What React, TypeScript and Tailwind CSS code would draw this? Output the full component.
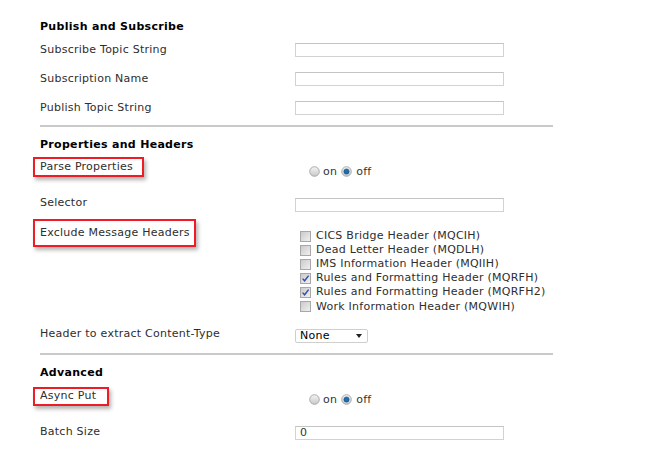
import React from "react";

const FONT = "font-['DejaVu_Sans',Verdana,sans-serif]";

function TextBox({ value = "" }: { value?: string }) {
  return (
    <div className="flex h-[14px] w-[209px] items-center border border-[#d2d2d2] border-t-[#c4c4c4] bg-white pl-[4px] text-[11px] leading-none text-[#333]">
      {value}
    </div>
  );
}

function Radio({ checked }: { checked?: boolean }) {
  return (
    <svg width="11" height="11" viewBox="0 0 11 11" aria-hidden="true">
      <defs>
        <linearGradient id="rg" x1="0" y1="0" x2="0" y2="1">
          <stop offset="0" stopColor="#f4f4f4" />
          <stop offset="1" stopColor="#c9c9c9" />
        </linearGradient>
      </defs>
      <circle cx="5.5" cy="5.5" r="4.8" fill="url(#rg)" stroke="#9a9a9a" strokeWidth="0.8" />
      {checked && <circle cx="5.5" cy="5.5" r="2.6" fill="#1d6fb0" stroke="#0d4a80" strokeWidth="0.6" />}
    </svg>
  );
}

function OnOff() {
  return (
    <div className="flex items-center text-[11px] leading-none text-[#333]">
      <Radio />
      <span className="ml-[3px]">on</span>
      <span className="ml-[4px] flex"><Radio checked /></span>
      <span className="ml-[4px]">off</span>
    </div>
  );
}

function Check({ checked }: { checked?: boolean }) {
  return (
    <svg width="11" height="11" viewBox="0 0 11 11" aria-hidden="true">
      <defs>
        <linearGradient id="cg" x1="0" y1="0" x2="1" y2="1">
          <stop offset="0" stopColor="#c8c8c8" />
          <stop offset="1" stopColor="#f2f2f2" />
        </linearGradient>
      </defs>
      <rect x="0.5" y="0.5" width="10" height="10" fill="url(#cg)" stroke="#a8a8a8" />
      {checked && <path d="M2.6 5.6 L4.6 7.8 L8.6 2.6" fill="none" stroke="#2f4fa8" strokeWidth="1.4" />}
    </svg>
  );
}

// red annotation frame round a label
function Marked({ children, className }: { children: React.ReactNode; className: string }) {
  return (
    <div
      className={`-ml-[7px] flex items-center border-2 border-[#ee1c24] pl-[5px] shadow-[2px_3px_4px_rgba(0,0,0,0.3)] ${className}`}
    >
      {children}
    </div>
  );
}

const headers = [
  ["CICS Bridge Header (MQCIH)", false],
  ["Dead Letter Header (MQDLH)", false],
  ["IMS Information Header (MQIIH)", false],
  ["Rules and Formatting Header (MQRFH)", true],
  ["Rules and Formatting Header (MQRFH2)", true],
  ["Work Information Header (MQWIH)", false],
] as const;

export default function App() {
  return (
    <div className={`h-[458px] w-[647px] overflow-hidden bg-white pl-[40px] text-[11px] tracking-[0.25px] text-[#2e2e2e] ${FONT}`}>
      {/* Publish and Subscribe */}
      <div className="mt-[20px] flex h-[14px] items-center font-bold tracking-[0.3px] text-black">Publish and Subscribe</div>

      <div className="mt-[9px] flex h-[14px] items-center">
        <div className="w-[255px]">Subscribe Topic String</div>
        <TextBox />
      </div>
      <div className="mt-[15px] flex h-[14px] items-center">
        <div className="w-[255px]">Subscription Name</div>
        <TextBox />
      </div>
      <div className="mt-[15px] flex h-[14px] items-center">
        <div className="w-[255px]">Publish Topic String</div>
        <TextBox />
      </div>

      <div className="mt-[10px] h-[2px] w-[513px] bg-[#c9c9c9]" />

      {/* Properties and Headers */}
      <div className="mt-[11px] flex h-[14px] items-center font-bold tracking-[0.3px] text-black">Properties and Headers</div>

      <div className="mt-[5px] flex items-start">
        <div className="w-[255px]">
          <Marked className="h-[20px] w-[111px]">Parse Properties</Marked>
        </div>
        <div className="pl-[14px] pt-[9px]">
          <OnOff />
        </div>
      </div>

      <div className="mt-[21px] flex h-[14px] items-center">
        <div className="w-[255px] -mt-[3px]">Selector</div>
        <TextBox />
      </div>

      <div className="mt-[7px] flex items-start">
        <div className="w-[255px]">
          <Marked className="h-[28px] w-[163px]">Exclude Message Headers</Marked>
        </div>
        <div className="flex flex-col pl-[5px] pt-[10px]">
          {headers.map(([label, checked]) => (
            <div key={label} className="flex h-[14.15px] items-center">
              <Check checked={checked} />
              <span className="ml-[5px]">{label}</span>
            </div>
          ))}
        </div>
      </div>

      <div className="mt-[15px] flex h-[14px] items-center">
        <div className="w-[255px] -mt-[3px]">Header to extract Content-Type</div>
        <div className="flex h-[14px] w-[73px] items-center justify-between rounded-[2px] border border-[#cfcfcf] bg-white pl-[4px] pr-[5px] text-black">
          <span>None</span>
          <svg width="6" height="4" viewBox="0 0 6 4" aria-hidden="true">
            <path d="M0 0 H6 L3 4 Z" fill="#222" />
          </svg>
        </div>
      </div>

      <div className="mt-[10px] h-[2px] w-[513px] bg-[#c9c9c9]" />

      {/* Advanced */}
      <div className="mt-[11px] flex h-[14px] items-center font-bold tracking-[0.3px] text-black">Advanced</div>

      <div className="mt-[7px] flex items-start">
        <div className="w-[255px]">
          <Marked className="h-[19px] w-[76px]">Async Put</Marked>
        </div>
        <div className="pl-[14px] pt-[7px]">
          <OnOff />
        </div>
      </div>

      <div className="mt-[20px] flex h-[14px] items-center">
        <div className="w-[255px] -mt-[2px]">Batch Size</div>
        <TextBox value="0" />
      </div>
    </div>
  );
}
